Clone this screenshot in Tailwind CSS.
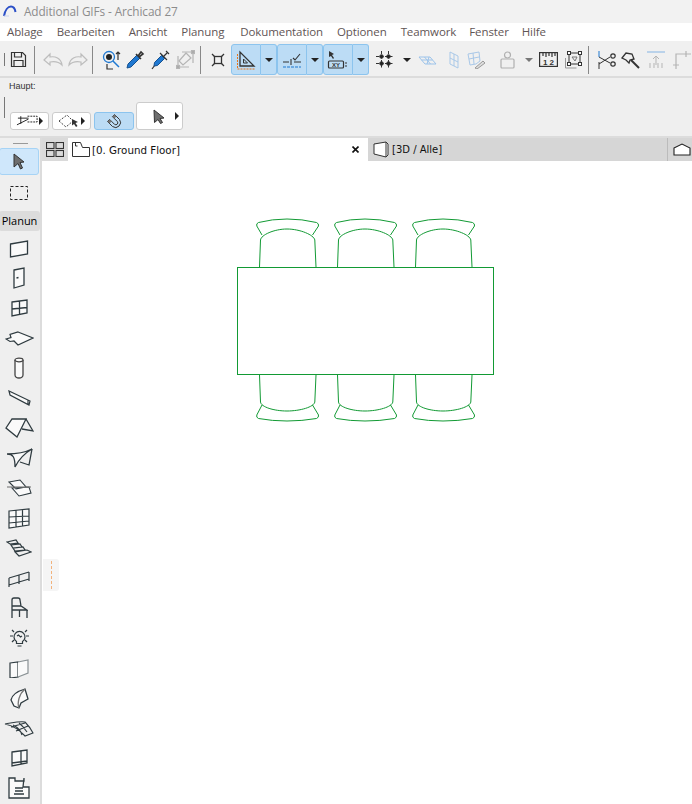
<!DOCTYPE html>
<html lang="de">
<head>
    <meta charset="UTF-8" />
    <meta name="viewport" content="width=device-width, initial-scale=1" />
    <title>Additional GIFs - Archicad 27</title>
    <script src="https://cdn.jsdelivr.net/npm/@tailwindcss/browser@4"></script>
</head>
<body class="bg-white overflow-hidden font-['Open_Sans',sans-serif]">
<div class="w-[692px] h-[804px] flex flex-col overflow-hidden">

    <!-- title bar -->
    <header class="h-[23px] bg-[#f2f2f2] flex items-center shrink-0">
        <svg class="ml-[3px] mt-[-2px]" width="14" height="12" viewBox="0 0 14 12" fill="none">
            <path d="M1 11C2 5 5 1.500 8 1.500C10.500 1.500 12 4 12.500 7" stroke="#2b4fc7" stroke-width="2"/>
            <path d="M1 11h5" stroke="#c9d2ee" stroke-width="1"/>
        </svg>
        <span class="ml-[7px] text-[11.8px] leading-none text-[#8c8c8c] tracking-[-0.1px]">Additional GIFs - Archicad 27</span>
    </header>

    <!-- menu -->
    <nav class="h-[18px] bg-white flex items-center pl-[7px] text-[11.5px] leading-none text-[#5f5555] shrink-0 tracking-[-0.1px]">
        <span>Ablage</span>
        <span class="ml-[14px]">Bearbeiten</span>
        <span class="ml-[14px]">Ansicht</span>
        <span class="ml-[14px]">Planung</span>
        <span class="ml-[16px]">Dokumentation</span>
        <span class="ml-[14px]">Optionen</span>
        <span class="ml-[14px]">Teamwork</span>
        <span class="ml-[13px]">Fenster</span>
        <span class="ml-[13px]">Hilfe</span>
    </nav>

    <!-- main toolbar -->
    <div class="h-[37px] pt-[2px] bg-[#f0f0f0] border-b-2 border-[#dcdcdc] flex items-center shrink-0 relative [&>*]:shrink-0">
        <div class="ml-[4px] w-px h-[13px] bg-[#777]"></div>
        <svg class="ml-[5px]" width="17" height="17" viewBox="0 0 17 17" fill="none" stroke="#333" stroke-width="1.200"><path d="M1.500 1.500h11l3 3v11h-14z"/><path d="M4.500 1.500v4.500h7v-4.500M4 15.500v-6h9v6"/></svg>
        <div class="ml-[7px] w-px h-[28px] bg-[#888]"></div>
        <svg class="ml-[8px]" width="20" height="15" viewBox="0 0 20 15" fill="none" stroke="#bdbdbd" stroke-width="1.200"><path d="M1 8l6-6v3c5-1 11 1 12 8-3-3-7-4-12-3v3z"/></svg>
        <svg class="ml-[5px]" width="20" height="15" viewBox="0 0 20 15" fill="none" stroke="#bdbdbd" stroke-width="1.200"><path d="M19 8l-6-6v3C8 4 2 6 1 13c3-3 7-4 12-3v3z"/></svg>
        <div class="ml-[4px] w-px h-[28px] bg-[#888]"></div>
        <svg class="ml-[9px]" width="20" height="20" viewBox="0 0 20 20" fill="none"><circle cx="7" cy="7" r="5.500" stroke="#1f78d1" stroke-width="1.300"/><circle cx="7" cy="7" r="3" fill="#222"/><path d="M11 11l6 6" stroke="#1f78d1" stroke-width="1.500"/><path d="M16 10V2M14 4l2-2 2 2M5 14v5h6" stroke="#333" stroke-width="1.200"/></svg>
        <svg class="ml-[3px]" width="20" height="20" viewBox="0 0 20 20" fill="none"><path d="M2 18l1-4 9-9 3 3-9 9z" fill="#1f78d1" stroke="#16518f"/><path d="M11 4l5 5M13 6l3-4 2 2-4 3" stroke="#333" stroke-width="1.600"/></svg>
        <svg class="ml-[6px]" width="19" height="20" viewBox="0 0 19 20" fill="none"><path d="M1 19l3-4" stroke="#333" stroke-width="1.200"/><path d="M3.500 12.500l7-7 3 3-7 7-3.500.5z" fill="#1f78d1" stroke="#16518f"/><path d="M9 3l7 7M13 6l3-3M15 1l3 3" stroke="#333" stroke-width="1.200"/></svg>
        <svg class="ml-[6px]" width="19" height="19" viewBox="0 0 19 19" fill="none" stroke="#b5b5b5" stroke-width="1.200"><path d="M2 6v11h11M6 2h11v11"/><path d="M3 11l7-8 5 5-8 7z"/><rect x="0.500" y="15.500" width="3" height="3" fill="#aaa"/><rect x="15.500" y="0.500" width="3" height="3" fill="#aaa"/></svg>
        <div class="ml-[5px] w-px h-[28px] bg-[#888]"></div>
        <svg class="ml-[10px]" width="14" height="14" viewBox="0 0 14 14" fill="none" stroke="#333" stroke-width="1.300"><rect x="3.500" y="3.500" width="7" height="7"/><path d="M3.500 3.500L1 1M10.500 3.500L13 1M3.500 10.500L1 13M10.500 10.500L13 13"/></svg>

        <div class="ml-[6px] h-[31px] flex">
            <div class="w-[30px] h-full bg-[#bcdcf5] border border-[#8cc4ee] rounded-l-[3px] flex items-center justify-center">
                <svg width="20" height="20" viewBox="0 0 20 20" fill="none"><path d="M4 2v14h14z" stroke="#333" stroke-width="1.300"/><path d="M7.500 9v4h4z" stroke="#333"/><path d="M1.500 4v15h17" stroke="#e8751a" stroke-dasharray="2 1"/></svg>
            </div>
            <div class="w-[16px] h-full bg-[#bcdcf5] border border-l-0 border-[#8cc4ee] rounded-r-[3px] flex items-center justify-center">
                <div class="w-0 h-0 border-x-[4px] border-x-transparent border-t-[4px] border-t-[#222]"></div>
            </div>
        </div>
        <div class="h-[31px] flex">
            <div class="w-[30px] h-full bg-[#bcdcf5] border border-[#8cc4ee] rounded-l-[3px] flex items-center justify-center">
                <svg width="20" height="20" viewBox="0 0 20 20" fill="none"><path d="M1 12h6M9 9v6M12 12h7M11 8l2 2 5-6" stroke="#333" stroke-width="1.100"/><path d="M1 17h18" stroke="#1f78d1" stroke-width="1.100" stroke-dasharray="3 1"/></svg>
            </div>
            <div class="w-[16px] h-full bg-[#bcdcf5] border border-l-0 border-[#8cc4ee] rounded-r-[3px] flex items-center justify-center">
                <div class="w-0 h-0 border-x-[4px] border-x-transparent border-t-[4px] border-t-[#222]"></div>
            </div>
        </div>
        <div class="h-[31px] flex">
            <div class="w-[30px] h-full bg-[#bcdcf5] border border-[#8cc4ee] rounded-l-[3px] flex items-center justify-center">
                <svg width="22" height="20" viewBox="0 0 22 20" fill="none"><path d="M2 1l5 3-2 1 2 3-1 1-2-3-2 1z" fill="#333"/><rect x="1.500" y="11" width="15" height="7" rx="1" stroke="#333" stroke-width="1.200"/><text x="9" y="16.500" text-anchor="middle" font-size="6" font-weight="700" font-family="Liberation Sans" fill="#333">XY</text><path d="M18 13h2M18 16h2" stroke="#333"/></svg>
            </div>
            <div class="w-[16px] h-full bg-[#bcdcf5] border border-l-0 border-[#8cc4ee] rounded-r-[3px] flex items-center justify-center">
                <div class="w-0 h-0 border-x-[4px] border-x-transparent border-t-[4px] border-t-[#222]"></div>
            </div>
        </div>

        <svg class="ml-[7px]" width="18" height="18" viewBox="0 0 18 18" fill="none" stroke="#333"><path d="M5.500 0v18M12.500 0v18M0 5.500h18M0 12.500h18" stroke-dasharray="3 1.500"/><circle cx="5.500" cy="5.500" r="1.800" fill="#222"/><circle cx="12.500" cy="5.500" r="1.800" fill="#222"/><circle cx="5.500" cy="12.500" r="1.800" fill="#222"/><circle cx="12.500" cy="12.500" r="1.800" fill="#222"/></svg>
        <div class="ml-[9px] w-0 h-0 border-x-[4px] border-x-transparent border-t-[4px] border-t-[#222]"></div>
        <svg class="ml-[7px]" width="19" height="10" viewBox="0 0 19 10" fill="none" stroke="#9cc3ea"><path d="M1 2h11l6 7H7zM6.500 2l6 7M11 2l-2 7M3.500 5h11" /></svg>
        <svg class="ml-[12px]" width="10" height="18" viewBox="0 0 10 18" fill="none" stroke="#a9c8e8"><path d="M1 1l8 4v12l-8-4zM5 3v12M1 7l8 4"/></svg>
        <svg class="ml-[8px]" width="19" height="18" viewBox="0 0 19 18" fill="none"><path d="M1 3l11-2 1 9-4 3-6 1zM6 2l1 11M2 8l10-2" stroke="#a9c8e8"/><path d="M8 17l8-7 2 2-8 6z" stroke="#999" fill="#ddd"/></svg>
        <svg class="ml-[14px]" width="15" height="18" viewBox="0 0 15 18" fill="none" stroke="#b0b0b0" stroke-width="1.200"><rect x="1" y="8" width="13" height="9" rx="1"/><circle cx="7.500" cy="4" r="3"/></svg>
        <div class="ml-[10px] w-0 h-0 border-x-[4px] border-x-transparent border-t-[4px] border-t-[#777]"></div>
        <svg class="ml-[6px]" width="19" height="15" viewBox="0 0 19 15" fill="none" stroke="#333" stroke-width="1.200"><rect x="0.600" y="0.600" width="17.800" height="13.800"/><path d="M4 1v3M7 1v4M10 1v3M13 1v4M16 1v3"/><text x="9.500" y="12.500" text-anchor="middle" font-size="8" font-family="Liberation Sans" font-weight="700" fill="#333" stroke="none">1 2</text></svg>
        <svg class="ml-[6px]" width="18" height="18" viewBox="0 0 18 18" fill="none" stroke="#333"><rect x="5" y="2" width="11" height="11"/><rect x="3.500" y="0.500" width="3" height="3" fill="#fff"/><rect x="14.500" y="0.500" width="3" height="3" fill="#fff"/><rect x="3.500" y="11.500" width="3" height="3" fill="#fff"/><rect x="14.500" y="11.500" width="3" height="3" fill="#fff"/><path d="M1.500 7v10h11" stroke="#999"/><path d="M8 6h5l-2 4z" stroke="#777"/></svg>
        <div class="ml-[6px] w-px h-[28px] bg-[#888]"></div>
        <svg class="ml-[9px]" width="18" height="18" viewBox="0 0 18 18" fill="none"><path d="M1 0v6" stroke="#1f78d1"/><path d="M1 11v7" stroke="#333"/><path d="M1 6l11 6M1 13l11-7" stroke="#333"/><circle cx="15" cy="5" r="2.200" stroke="#333" stroke-width="1.200"/><circle cx="15" cy="13" r="2.200" stroke="#333" stroke-width="1.200"/></svg>
        <svg class="ml-[5px]" width="19" height="18" viewBox="0 0 19 18" fill="none" stroke="#333" stroke-width="1.300"><path d="M1 7l4-5 6 1 2 5-4 1-1 3-3-3z"/><path d="M10 9l8 8"  stroke-width="2"/></svg>
        <svg class="ml-[7px]" width="18" height="18" viewBox="0 0 18 18" fill="none"><path d="M0 1h18" stroke="#a9c8e8" stroke-width="1.500"/><path d="M9 14V5M6 8l3-3 3 3M3 12v5M7 12v5M11 12v5M15 12v5" stroke="#b5b5b5"/></svg>
        <svg class="ml-[8px]" width="18" height="18" viewBox="0 0 18 18" fill="none" stroke="#b5b5b5" stroke-width="1.200"><path d="M3 18V3h15M0 14h6M13 0v6"/></svg>
    </div>

    <!-- second toolbar -->
    <div class="h-[60px] bg-[#efefef] border-b-2 border-[#dcdcdc] shrink-0 relative pl-[4px]">
        <div class="pt-[3px] pl-[5px] h-[19px] text-[9px] leading-[11px] text-[#333] font-['Liberation_Sans',sans-serif]">Haupt:</div>
        <div class="flex items-end h-[33px]">
            <div class="w-px h-[21px] bg-[#777] mb-[12px]"></div>
            <div class="ml-[5px] w-[39px] h-[18px] bg-white border border-[#ccc] rounded-[3px] flex items-center justify-between px-[5px]">
                <svg width="24" height="12" viewBox="0 0 24 12" fill="none" stroke="#222"><path d="M12 1h10v6H12" stroke-dasharray="2 1"/><path d="M2 3h11M5 1v8M1 10l12-6" /></svg>
                <div class="w-0 h-0 border-y-[4px] border-y-transparent border-l-[4px] border-l-[#222]"></div>
            </div>
            <div class="ml-[3px] w-[39px] h-[18px] bg-white border border-[#ccc] rounded-[3px] flex items-center justify-between px-[5px]">
                <svg width="22" height="14" viewBox="0 0 22 14" fill="none"><path d="M1 7l8-6 6 6-7 6z" stroke="#444" stroke-dasharray="2 1.500"/><path d="M14 5l6 3-2.500 1 2 3-1.500 1-2-3-2 1.500z" fill="#333"/></svg>
                <div class="w-0 h-0 border-y-[4px] border-y-transparent border-l-[4px] border-l-[#222]"></div>
            </div>
            <div class="ml-[3px] w-[40px] h-[18px] bg-[#bcdcf5] border border-[#8cc4ee] rounded-[3px] flex items-center justify-center">
                <svg width="16" height="16" viewBox="0 0 16 16" fill="none"><path d="M8.500 1.500L13.500 6.500A5 5 0 0 1 6.500 13.500L1.500 8.500L3.600 6.400L8.600 11.400A2 2 0 0 0 11.400 8.600L6.400 3.600Z" stroke="#333"/><path d="M8.500 1.500L6.400 3.600L8.400 5.600L10.500 3.500zM1.500 8.500L3.600 6.400L5.600 8.400L3.500 10.500z" fill="#777"/></svg>
            </div>
            <div class="ml-[2px] w-[47px] h-[28px] bg-white border border-[#ccc] rounded-[3px] flex items-center justify-end pr-[3px] relative">
                <svg class="absolute left-[15px] top-[6px]" width="14" height="16" viewBox="0 0 14 16"><path d="M2 1l10 8-4 .5 2.500 4-2 1-2.500-4-3.500 3z" fill="#6e6e6e" stroke="#333"/></svg>
                <div class="w-0 h-0 border-y-[4px] border-y-transparent border-l-[4px] border-l-[#222]"></div>
            </div>
        </div>
    </div>

    <div class="flex flex-1 min-h-0 relative">
        <!-- tool palette -->
        <aside class="w-[42px] bg-[#efefef] border-r-2 border-[#dcdcdc] flex flex-col items-center shrink-0">
            <div class="mt-[5px] w-[15px] h-px bg-[#999]"></div>
            <div class="mt-[4px] w-[40px] h-[27px] bg-[#cfe7fb] border border-[#a6d3f5] rounded-[3px] flex items-center justify-center mr-[2px]">
                <svg width="14" height="18" viewBox="0 0 14 18"><path d="M2 1l10 8-4 .5 2.500 5.500-2 1-2.500-5.500-4 3.500z" fill="#6e6e6e" stroke="#333"/></svg>
            </div>
            <div class="h-[36px] flex items-center justify-center mr-[2px]">
                <svg width="20" height="16" viewBox="0 0 20 16" fill="none" stroke="#222" stroke-dasharray="3 2"><rect x="1.500" y="1.500" width="17" height="13"/></svg>
            </div>
            <div class="w-[41px] mr-[1px] h-[20px] bg-[#dcdcdc] rounded-[3px] text-[11px] leading-[20px] text-black text-center overflow-hidden shrink-0 mb-[2px]">Planun</div>

            <div class="h-[30px] flex items-center justify-center mr-[2px] shrink-0"><svg width="20" height="20" viewBox="0 0 20 20" fill="#fafafa" stroke="#2f3b40" stroke-width="1.300"><path d="M1.500 6L18.500 3v13L1.500 19z"/></svg></div>
            <div class="h-[30px] flex items-center justify-center mr-[2px] shrink-0"><svg width="12" height="22" viewBox="0 0 12 22" fill="#fafafa" stroke="#2f3b40" stroke-width="1.300"><path d="M1 3L11 1v17L1 21z"/><path d="M3.500 11l2-.5" /></svg></div>
            <div class="h-[30px] flex items-center justify-center mr-[2px] shrink-0"><svg width="17" height="18" viewBox="0 0 17 18" fill="#fafafa" stroke="#2f3b40" stroke-width="1.300"><path d="M1 3l15-2v13L1 17zM8.500 2v14M1 10l15-1.500"/></svg></div>
            <div class="h-[30px] flex items-center justify-center mr-[2px] shrink-0"><svg width="29" height="15" viewBox="0 0 29 15" fill="#fafafa" stroke="#2f3b40" stroke-width="1.200"><path d="M13 1l15 6-15 7-4-4-4 .5-4-2.500 5-1.500-1-3z"/></svg></div>
            <div class="h-[30px] flex items-center justify-center mr-[2px] shrink-0"><svg width="10" height="22" viewBox="0 0 10 22" fill="#fafafa" stroke="#444" stroke-width="1.300"><path d="M1 3v15a4 3 0 0 0 8 0V3"/><ellipse cx="5" cy="3" rx="4" ry="1.800"/></svg></div>
            <div class="h-[30px] flex items-center justify-center mr-[2px] shrink-0"><svg width="23" height="16" viewBox="0 0 23 16" fill="#fafafa" stroke="#2f3b40" stroke-width="1.200"><path d="M1 1l1 4 19 10 1-4zM20 10v5"/></svg></div>
            <div class="h-[30px] flex items-center justify-center mr-[2px] shrink-0"><svg width="29" height="20" viewBox="0 0 29 20" fill="#fafafa" stroke="#2f3b40" stroke-width="1.300"><path d="M1 10L7 1h14l-9 18z"/><path d="M21 1l7 12-11-2" fill="none"/></svg></div>
            <div class="h-[30px] flex items-center justify-center mr-[2px] shrink-0"><svg width="27" height="20" viewBox="0 0 27 20" fill="#fafafa" stroke="#2f3b40" stroke-width="1.300"><path d="M1 6c6 0 8 3 8 13 4-8 10-14 17-18C20 4 12 6 1 6z"/><path d="M26 1l-3 16-9-3" fill="none"/></svg></div>
            <div class="h-[30px] flex items-center justify-center mr-[2px] shrink-0"><svg width="25" height="18" viewBox="0 0 25 18" fill="#fafafa" stroke="#2f3b40" stroke-width="1.100"><path d="M2 3l11-2 6 7-10 2zM5 9l17-1 2 6-12 3z"/><path d="M0 8h24" stroke="#777" /></svg></div>
            <div class="h-[30px] flex items-center justify-center mr-[2px] shrink-0"><svg width="22" height="21" viewBox="0 0 22 21" fill="#fafafa" stroke="#2f3b40" stroke-width="1.200"><path d="M1 3l20-2v16L1 20zM8 2v17M14.500 2v16M1 9l20-1M1 15l20-2"/></svg></div>
            <div class="h-[30px] flex items-center justify-center mr-[2px] shrink-0"><svg width="26" height="18" viewBox="0 0 26 18" fill="none" stroke="#2f3b40" stroke-width="1.200"><path d="M1 3l9-2 2 3-8 1zM5 6l9-1 2 3-9 1zM7 9l10-1 2 3-10 1zM9 13l12-2 4 2-12 4z"/></svg></div>
            <div class="h-[30px] flex items-center justify-center mr-[2px] shrink-0"><svg width="22" height="17" viewBox="0 0 22 17" fill="none" stroke="#2f3b40" stroke-width="1.200"><path d="M1 8l20-6M1 15l20-6M1 8v9M11 5v9M21 2v9"/></svg></div>
            <div class="h-[30px] flex items-center justify-center mr-[2px] shrink-0"><svg width="17" height="22" viewBox="0 0 17 22" fill="none" stroke="#2f3b40" stroke-width="1.300"><path d="M1 21V3a2 2 0 0 1 2-2h4a2 2 0 0 1 2 2l1 6M1 9h9l6 4H1M16 13v8M8.500 13v7"/></svg></div>
            <div class="h-[30px] flex items-center justify-center mr-[2px] shrink-0"><svg width="21" height="20" viewBox="0 0 21 20" fill="none" stroke="#2f3b40" stroke-width="1.200"><path d="M7.500 13.500a5.500 5.500 0 1 1 6 0v2h-6zM8.500 18h4M8 8l1.500-1 2 2 1.500-1M1 8h3M17 8h3M3 2l2 2M18 2l-2 2M3 14l2-2M18 14l-2-2"/></svg></div>
            <div class="h-[30px] flex items-center justify-center mr-[2px] shrink-0"><svg width="20" height="19" viewBox="0 0 20 19" fill="#fafafa" stroke="#2f3b40" stroke-width="1.200"><path d="M1 4l8-1v15l-8 1z"/><path d="M9 3l10-2v13L9 18" stroke="#8a9295"/></svg></div>
            <div class="h-[30px] flex items-center justify-center mr-[2px] shrink-0"><svg width="19" height="21" viewBox="0 0 19 21" fill="#fafafa" stroke="#2f3b40" stroke-width="1.300"><path d="M1 12C2 7 8 3 15 1l3 10-7 4-2 5-5-2z"/><path d="M9 20c-2-5 0-14 6-19" fill="none" stroke="#777"/></svg></div>
            <div class="h-[30px] flex items-center justify-center mr-[2px] shrink-0"><svg width="30" height="17" viewBox="0 0 30 17" fill="none" stroke="#2f3b40" stroke-width="1.100"><path d="M1 4c7-1 14-3 20-2 3 3 6 7 8 11l-8 3c-5-5-10-10-20-12zM9 5c4 2 8 6 9 10M15 3c4 3 6 6 8 9M7 7l14-4M12 11l12-5"/></svg></div>
            <div class="h-[30px] flex items-center justify-center mr-[2px] shrink-0"><svg width="17" height="18" viewBox="0 0 17 18" fill="#fafafa" stroke="#2f3b40" stroke-width="1.300"><path d="M1 3l15-2v13L1 17zM10 2v13M1 14l15-2"/></svg></div>
            <div class="h-[30px] flex items-center justify-center mr-[2px] shrink-0"><svg width="22" height="22" viewBox="0 0 22 22" fill="#fafafa" stroke="#2f3b40" stroke-width="1.300"><path d="M1 1h6v3h9V1l-1 9h6v11H1zM7 11h8M7 14h8M6 17h10"/></svg></div>
        </aside>

        <!-- view area -->
        <main class="flex-1 flex flex-col min-w-0">
            <div class="h-[23px] flex shrink-0 bg-[#d6d6d6]">
                <div class="w-[26px] flex items-center justify-center bg-[#dadada]">
                    <svg width="18" height="15" viewBox="0 0 18 15" fill="none" stroke="#333" stroke-width="1.100"><rect x="0.500" y="0.500" width="7.500" height="6"/><rect x="10" y="0.500" width="7.500" height="6"/><rect x="0.500" y="8.500" width="7.500" height="6"/><rect x="10" y="8.500" width="7.500" height="6"/></svg>
                </div>
                <div class="w-[300px] bg-white flex items-center relative">
                    <svg class="ml-[4px]" width="18" height="15" viewBox="0 0 18 15" fill="none" stroke="#333"><path d="M0.500 14.500V0.500h8l2 5h7v9zM3.500 1v3M3.500 4h2"/></svg>
                    <span class="ml-[2px] pt-[1px] text-[10.3px] leading-none text-[#111] font-['DejaVu_Sans',sans-serif]">[0. Ground Floor]</span>
                    <svg class="absolute right-[9px] top-[8px]" width="7" height="7" viewBox="0 0 7 7" stroke="#111" stroke-width="1.600"><path d="M0.500 0.500l6 6M6.500 0.500l-6 6"/></svg>
                </div>
                <div class="w-[299px] flex items-center">
                    <svg class="ml-[5px]" width="16" height="17" viewBox="0 0 16 17" fill="#fff" stroke="#333"><path d="M1 3l12-2 2 2v11l-2 2-12-3z"/><path d="M13 1v15" /></svg>
                    <span class="ml-[3px] pt-[1px] text-[10px] leading-none text-[#111] font-['DejaVu_Sans',sans-serif]">[3D / Alle]</span>
                </div>
                <div class="flex-1 border-l border-[#bbb] flex items-center pl-[5px]">
                    <svg width="18" height="13" viewBox="0 0 18 13" fill="#fff" stroke="#222" stroke-width="1.100"><path d="M1 5l8-4 8 4v7H1z"/></svg>
                </div>
            </div>
            <svg class="flex-1 w-full block" viewBox="42 161 650 643" fill="none" stroke="#129a34" stroke-width="1">
                <rect x="237.500" y="267.500" width="256" height="107"/>
                <path d="M259.500 267L260.500 240C261 235 274 229 287 229S314 235 314.800 240L316 267M262 235L256.800 226Q256 223.500 258.500 222.500Q272 219 287 219T316.500 222.500Q319 223.500 318.500 226L312.500 235"/>
                <path d="M337.500 267L338.500 240C339 235 352 229 365 229S392 235 392.800 240L394 267M340 235L334.800 226Q334 223.500 336.500 222.500Q350 219 365 219T394.500 222.500Q397 223.500 396.500 226L390.500 235"/>
                <path d="M415.500 267L416.500 240C417 235 430 229 443 229S470 235 470.800 240L472 267M418 235L412.800 226Q412 223.500 414.500 222.500Q428 219 443 219T472.500 222.500Q475 223.500 474.500 226L468.500 235"/>
                <path d="M259.500 375L260.500 402C261 407 274 411 287 411S314 407 314.800 402L316 375M262 405L256.800 415Q256 417.500 258.500 418.500Q272 421 287 421T316.500 418.500Q319 417.500 318.500 415L312.500 405"/>
                <path d="M337.500 375L338.500 402C339 407 352 411 365 411S392 407 392.800 402L394 375M340 405L334.800 415Q334 417.500 336.500 418.500Q350 421 365 421T394.500 418.500Q397 417.500 396.500 415L390.500 405"/>
                <path d="M415.500 375L416.500 402C417 407 430 411 443 411S470 407 470.800 402L472 375M418 405L412.800 415Q412 417.500 414.500 418.500Q428 421 443 421T472.500 418.500Q475 417.500 474.500 415L468.500 405"/>
            </svg>
        </main>

        <!-- palette resize handle -->
        <div class="absolute left-[43px] top-[421px] w-[16px] h-[32px] bg-[#f5f5f5] rounded-r-[3px] flex justify-center pt-[2px]">
            <div class="w-px h-[28px] border-l border-dashed border-[#f2b27c]"></div>
        </div>
    </div>
</div>
</body>
</html>
